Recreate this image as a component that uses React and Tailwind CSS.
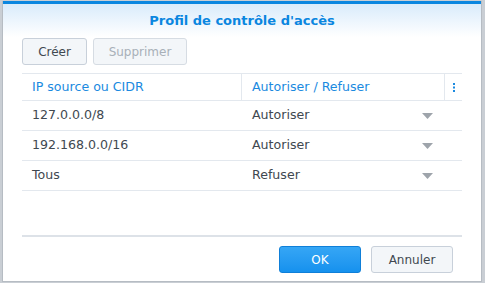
const rows = [
  { ip: '127.0.0.0/8', action: 'Autoriser' },
  { ip: '192.168.0.0/16', action: 'Autoriser' },
  { ip: 'Tous', action: 'Refuser' },
];

function Caret() {
  return (
    <svg width="11" height="6" viewBox="0 0 11 6" className="shrink-0">
      <path d="M0 0h11L5.5 6z" fill="#9ea4ab" />
    </svg>
  );
}

export default function App() {
  return (
    <div className="h-[283px] w-[485px] overflow-hidden bg-[#c9ced4] pl-[2px] pt-[1px] font-['DejaVu_Sans',sans-serif]">
      <div className="flex h-[281px] w-[480px] flex-col border border-[#b6bcc3] border-t-0 bg-white">
        <div className="h-[3px] bg-[#0a86e0]" />
        <div className="flex h-[33px] items-center justify-center bg-gradient-to-b from-[#d9ebfb] to-white text-[13px] font-bold text-[#0a86e0]">
          Profil de contrôle d'accès
        </div>

        <div className="flex gap-[6px] px-[19px] pt-[1px]">
          <button className="h-[27px] w-[65px] rounded-[3px] border border-[#c8d0da] bg-[#f3f6f9] text-[12px] text-[#404850]">
            Créer
          </button>
          <button className="h-[27px] w-[94px] rounded-[3px] border border-[#d6dce3] bg-[#f3f6f9] text-[12px] text-[#a8b0b8]">
            Supprimer
          </button>
        </div>

        <div className="mx-[19px] mt-[8px] flex h-[164px] flex-col border-t border-b-2 border-[#e3e8ee] border-b-[#dde2e8]">
          <div className="flex h-[27px] border-b border-[#e3e8ee] text-[12.6px] text-[#1b8ae0]">
            <div className="flex w-[220px] items-center border-r border-[#e3e8ee] pl-[10px]">IP source ou CIDR</div>
            <div className="flex w-[203px] items-center border-r border-[#e3e8ee] pl-[10px]">Autoriser / Refuser</div>
            <div className="flex flex-1 items-center justify-center">
              <svg width="2" height="9" viewBox="0 0 2 9">
                <rect x="0" y="0" width="2" height="2" fill="#1b8ae0" />
                <rect x="0" y="3.5" width="2" height="2" fill="#1b8ae0" />
                <rect x="0" y="7" width="2" height="2" fill="#1b8ae0" />
              </svg>
            </div>
          </div>
          {rows.map((r) => (
            <div key={r.ip} className="flex h-[30px] border-b border-[#e3e8ee] text-[12.6px] text-[#404850]">
              <div className="flex w-[220px] items-center pl-[10px]">{r.ip}</div>
              <div className="flex w-[203px] items-center justify-between pl-[10px] pr-[12px]">
                <span>{r.action}</span>
                <Caret />
              </div>
            </div>
          ))}
        </div>

        <div className="flex justify-end gap-[10px] px-[28px] pt-[9px]">
          <button className="h-[27px] w-[82px] rounded-[3px] border border-[#0f7fd8] bg-gradient-to-b from-[#35a6f5] to-[#1591ee] text-[12px] text-white">
            OK
          </button>
          <button className="h-[27px] w-[82px] rounded-[3px] border border-[#c8d0da] bg-[#f3f6f9] text-[12px] text-[#404850]">
            Annuler
          </button>
        </div>
      </div>
    </div>
  );
}
